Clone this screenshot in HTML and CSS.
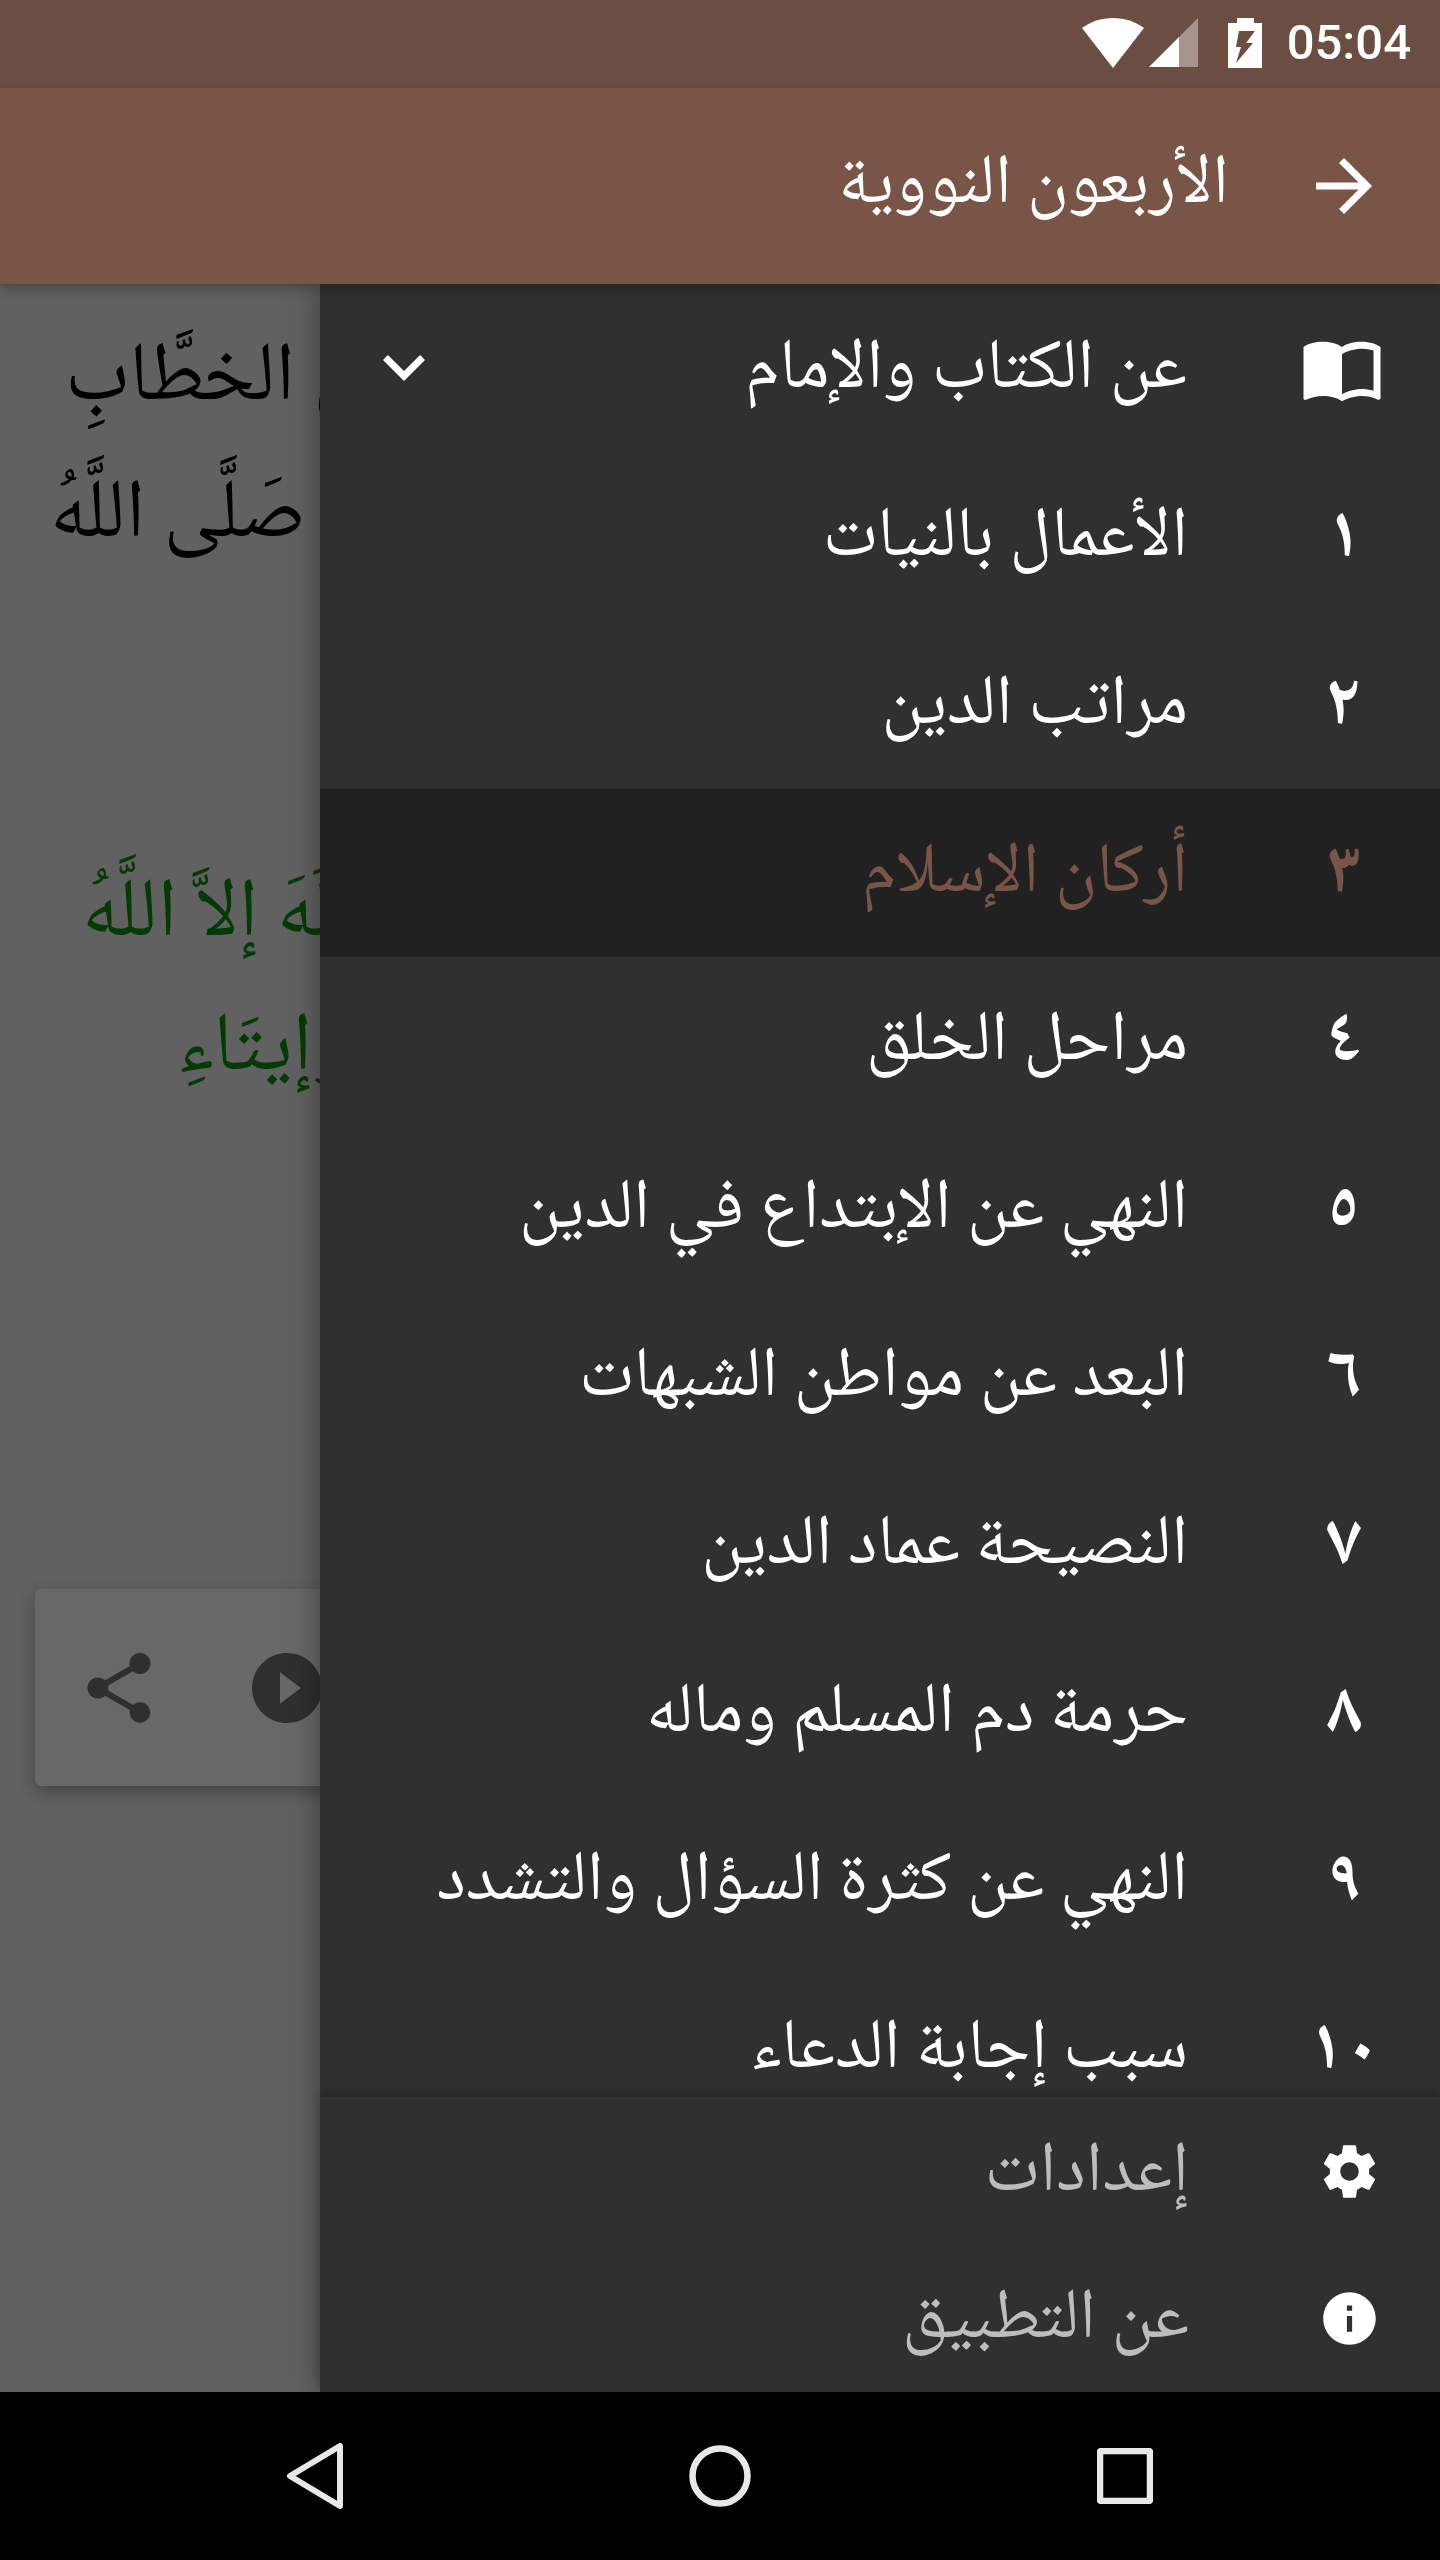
FILE: index.html
```html
<!DOCTYPE html>
<html lang="ar">
<head>
    <meta charset="UTF-8">
    <meta name="viewport" content="width=device-width, initial-scale=1.0">
    <title>الأربعون النووية</title>
    <link rel="stylesheet" href="styles.css">
</head>
<body>

    <div class="status-bar">
        <svg class="icon-wifi" width="64" height="50" viewBox="0 0 64 50"><path d="M1 10C10 3.500 20 0 32 0s22 3.500 31 10L32 50z" fill="#fff"/></svg>
        <svg class="icon-signal" width="50" height="50" viewBox="0 0 50 50"><path d="M0 49L30 19v30z" fill="#fff"/><path d="M30 19L49 0v49H30z" fill="#fff" opacity="0.4"/></svg>
        <svg class="icon-battery" width="34" height="50" viewBox="0 0 34 50"><path fill-rule="evenodd" d="M9 0h17v5h8v45H0V5h9zM11 13h16l-9 12h7L8 45l5-16H8z" fill="#fff"/></svg>
        <span class="clock">05:04</span>
    </div>

    <header class="app-bar">
        <span class="app-title">الأربعون النووية</span>
        <svg class="icon-back" width="84" height="84" viewBox="0 0 24 24"><path d="M4 11h12.170l-5.590-5.590L12 4l8 8-8 8-1.410-1.410L16.170 13H4v-2z" fill="#fff"/></svg>
    </header>

    <main class="screen">
        <div class="reader">
            <p class="line line-1"><span dir="rtl">بْنِ الخطَّابِ</span></p>
            <p class="line line-2"><span dir="rtl">صَلَّى اللَّهُ</span></p>
            <p class="line line-3 green"><span dir="rtl">إلَهَ إلاَّ اللَّهُ</span></p>
            <p class="line line-4 green"><span dir="rtl">وَإيتَاءِ</span></p>
            <div class="card">
                <svg class="card-icon" width="84" height="84" viewBox="0 0 24 24"><path d="M18 16.080c-.76 0-1.440.3-1.960.77L8.910 12.700c.05-.23.09-.46.09-.7s-.04-.47-.09-.7l7.050-4.110c.54.5 1.250.81 2.040.81 1.660 0 3-1.340 3-3s-1.340-3-3-3-3 1.340-3 3c0 .24.04.47.09.7L8.040 9.810C7.500 9.310 6.790 9 6 9c-1.660 0-3 1.340-3 3s1.340 3 3 3c.79 0 1.500-.31 2.040-.81l7.120 4.160c-.05.21-.08.43-.08.65 0 1.610 1.310 2.920 2.920 2.920 1.610 0 2.920-1.310 2.920-2.920s-1.310-2.920-2.920-2.920z"/></svg>
                <svg class="card-icon" width="84" height="84" viewBox="0 0 24 24"><path d="M12 2C6.480 2 2 6.480 2 12s4.480 10 10 10 10-4.480 10-10S17.520 2 12 2zm-2 14.500v-9l6 4.500-6 4.500z"/></svg>
            </div>
        </div>

        <aside class="drawer">
            <ul class="chapters">
                <li class="row">
                    <svg class="row-icon" width="84" height="84" viewBox="0 0 24 24"><path d="M21 5c-1.110-.35-2.330-.5-3.500-.5-1.950 0-4.050.4-5.500 1.500-1.450-1.100-3.550-1.500-5.500-1.500S2.450 4.900 1 6v14.650c0 .25.25.5.5.5.1 0 .15-.05.25-.05C3.100 20.450 5.050 20 6.500 20c1.950 0 4.050.4 5.500 1.500 1.350-.85 3.800-1.500 5.500-1.500 1.650 0 3.350.3 4.750 1.050.1.05.15.05.25.05.25 0 .5-.25.5-.5V6c-.6-.45-1.250-.75-2-1zm0 13.500c-1.100-.35-2.300-.5-3.500-.5-1.700 0-4.150.65-5.500 1.500V8c1.350-.85 3.800-1.500 5.500-1.500 1.200 0 2.400.15 3.500.5v11.500z" fill="#fff"/></svg>
                    <span class="row-text">عن الكتاب والإمام</span>
                    <svg class="row-chevron" width="84" height="84" viewBox="0 0 24 24"><path d="M16.590 8.590L12 13.170 7.410 8.590 6 10l6 6 6-6z" fill="#fff"/></svg>
                </li>
                <li class="row"><span class="num">١</span><span class="row-text">الأعمال بالنيات</span></li>
                <li class="row"><span class="num">٢</span><span class="row-text">مراتب الدين</span></li>
                <li class="row selected"><span class="num">٣</span><span class="row-text">أركان الإسلام</span></li>
                <li class="row"><span class="num">٤</span><span class="row-text">مراحل الخلق</span></li>
                <li class="row"><span class="num">٥</span><span class="row-text">النهي عن الإبتداع في الدين</span></li>
                <li class="row"><span class="num">٦</span><span class="row-text">البعد عن مواطن الشبهات</span></li>
                <li class="row"><span class="num">٧</span><span class="row-text">النصيحة عماد الدين</span></li>
                <li class="row"><span class="num">٨</span><span class="row-text">حرمة دم المسلم وماله</span></li>
                <li class="row"><span class="num">٩</span><span class="row-text">النهي عن كثرة السؤال والتشدد</span></li>
                <li class="row"><span class="num">١٠</span><span class="row-text">سبب إجابة الدعاء</span></li>
            </ul>
            <div class="drawer-footer">
                <div class="foot-row">
                    <svg class="foot-icon" width="63" height="63" viewBox="0 0 24 24"><path d="M19.430 12.980c.04-.32.07-.64.07-.98s-.03-.66-.07-.98l2.110-1.650c.19-.15.24-.42.12-.64l-2-3.460c-.12-.22-.39-.3-.61-.22l-2.490 1c-.52-.4-1.080-.73-1.690-.98l-.38-2.650C14.460 2.180 14.250 2 14 2h-4c-.25 0-.46.18-.49.42l-.38 2.650c-.61.25-1.170.59-1.690.98l-2.490-1c-.23-.09-.49 0-.61.22l-2 3.460c-.13.22-.07.49.12.64l2.110 1.650c-.04.32-.07.65-.07.98s.03.66.07.98l-2.110 1.650c-.19.15-.24.42-.12.64l2 3.460c.12.22.39.3.61.22l2.490-1c.52.4 1.080.73 1.690.98l.38 2.650c.03.24.24.42.49.42h4c.25 0 .46-.18.49-.42l.38-2.650c.61-.25 1.170-.59 1.690-.98l2.490 1c.23.09.49 0 .61-.22l2-3.460c.12-.22.07-.49-.12-.64l-2.110-1.650zM12 15.500c-1.930 0-3.500-1.570-3.500-3.500s1.570-3.500 3.500-3.500 3.500 1.570 3.500 3.500-1.570 3.500-3.500 3.500z" fill="#fff"/></svg>
                    <span class="foot-text">إعدادات</span>
                </div>
                <div class="foot-row">
                    <svg class="foot-icon" width="63" height="63" viewBox="0 0 24 24"><path d="M12 2C6.480 2 2 6.480 2 12s4.480 10 10 10 10-4.480 10-10S17.520 2 12 2zm1 15h-2v-6h2v6zm0-8h-2V7h2v2z" fill="#fff"/></svg>
                    <span class="foot-text">عن التطبيق</span>
                </div>
            </div>
        </aside>
    </main>

    <nav class="nav-bar">
        <svg width="64" height="72" viewBox="0 0 64 72"><path d="M56 6v60L6 36z" fill="none" stroke="#e8e8e8" stroke-width="6" stroke-linejoin="round"/></svg>
        <svg class="nav-home" width="64" height="64" viewBox="0 0 64 64"><circle cx="32" cy="32" r="27.500" fill="none" stroke="#e8e8e8" stroke-width="6.500"/></svg>
        <svg class="nav-recent" width="56" height="56" viewBox="0 0 56 56"><rect x="3" y="3" width="50" height="50" rx="1" fill="none" stroke="#e8e8e8" stroke-width="6.500"/></svg>
    </nav>

</body>
</html>
```

FILE: styles.css
```css
* {
    margin: 0;
    padding: 0;
    box-sizing: border-box;
}

body {
    width: 1440px;
    height: 2560px;
    display: flex;
    flex-direction: column;
    overflow: hidden;
    background: #000;
    font-family: "Noto Naskh Arabic", "Noto Sans Arabic", "DejaVu Sans", sans-serif;
}

svg {
    display: block;
    flex-shrink: 0;
}

/* Status bar */
.status-bar {
    height: 88px;
    background: #6b4e42;
    display: flex;
    align-items: flex-start;
    padding: 18px 29px 0 0;
    justify-content: flex-end;
}

.icon-wifi {
    margin-right: 4px;
}

.icon-signal {
    margin-right: 29px;
}

.icon-battery {
    margin-right: 25px;
}

.clock {
    font-family: Roboto, sans-serif;
    font-weight: 500;
    font-size: 49px;
    line-height: 50px;
    color: #fff;
}

/* App bar */
.app-bar {
    height: 196px;
    background: #795548;
    display: flex;
    align-items: center;
    justify-content: flex-end;
    padding-right: 54px;
    position: relative;
    z-index: 2;
    box-shadow: 0 4px 12px rgba(0, 0, 0, 0.3);
}

.app-title {
    font-size: 70px;
    color: #fff;
    margin-right: 73px;
    white-space: nowrap;
}

/* Dimmed reading page */
.screen {
    flex: 1;
    position: relative;
    overflow: hidden;
    background: #616161;
}

.reader {
    padding-top: 30px;
}

.line {
    display: flex;
    font-size: 83px;
    line-height: 134px;
    color: #000;
    white-space: nowrap;
}

.line span {
    flex-shrink: 0;
}

.green {
    color: #043a04;
}

.line-1 {
    padding-left: 65px;
    margin-bottom: 3px;
}

.line-2 {
    padding-left: 50px;
}

.line-3 {
    padding-left: 82px;
    margin-top: 265px;
}

.line-4 {
    padding-left: 177px;
}

.card {
    display: flex;
    align-items: center;
    gap: 84px;
    width: 600px;
    height: 197px;
    margin-left: 35px;
    margin-top: 471px;
    padding-left: 42px;
    background: #686868;
    border-radius: 6px;
    box-shadow: 0 6px 16px rgba(0, 0, 0, 0.3);
    fill: #2f2f2f;
}

/* Drawer, lies over the page */
.drawer {
    position: absolute;
    top: 0;
    bottom: 0;
    left: 320px;
    right: 0;
    background: #303030;
    box-shadow: 0 0 28px rgba(0, 0, 0, 0.4);
    display: flex;
    flex-direction: column;
}

.chapters {
    flex: 1;
    min-height: 0;
    overflow: hidden;
    list-style: none;
    padding-top: 1px;
}

.row {
    height: 168px;
    display: flex;
    flex-direction: row-reverse;
    align-items: center;
    position: relative;
    color: #fff;
    font-size: 70.8px;
    padding-right: 57px;
}

.selected {
    background: #212121;
    color: #795548;
}

.num {
    width: 80px;
    padding-top: 6px;
    text-align: center;
    font-weight: bold;
    font-size: 72px;
    margin-right: -1px;
}

.row-icon {
    margin-right: -1px;
    margin-bottom: 2px;
}

.row-text {
    margin-right: 116px;
    padding-top: 4px;
    white-space: nowrap;
}

.row-icon + .row-text {
    margin-right: 113px;
}

.row-chevron {
    position: absolute;
    left: 42px;
    top: 40px;
}

.drawer-footer {
    height: 295px;
    flex-shrink: 0;
    position: relative;
    box-shadow: 0 -4px 8px rgba(0, 0, 0, 0.2);
    padding-top: 1px;
}

.foot-row {
    height: 147px;
    display: flex;
    flex-direction: row-reverse;
    align-items: center;
    padding-right: 59px;
    color: #bdbdbd;
    font-size: 71px;
}

.foot-text {
    margin-right: 129px;
    padding-top: 6px;
    white-space: nowrap;
}

/* Navigation bar */
.nav-bar {
    height: 168px;
    background: #000;
    display: flex;
    align-items: center;
    flex-shrink: 0;
    padding-left: 284px;
}

.nav-home {
    margin-left: 340px;
}

.nav-recent {
    margin-left: 345px;
}
```
